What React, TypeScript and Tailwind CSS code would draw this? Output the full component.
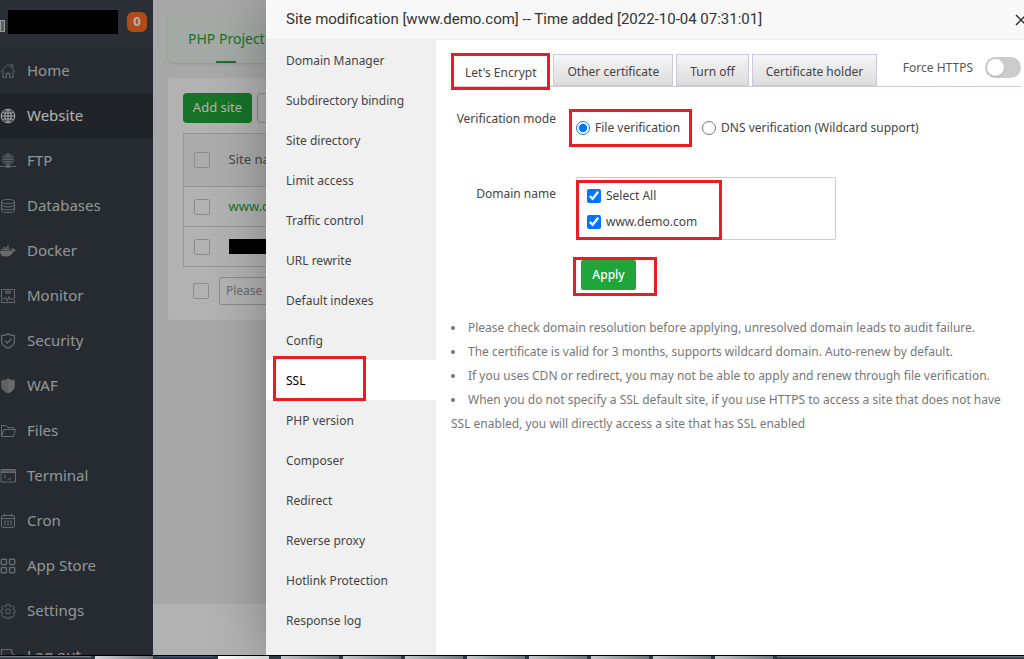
import { useState } from "react";
import type { ReactNode } from "react";
import { FaDocker } from "react-icons/fa";

const svgProps = {
  viewBox: "0 0 16 16",
  fill: "none",
  stroke: "currentColor",
  strokeWidth: 1,
  className: "size-4 shrink-0",
  "aria-hidden": true,
} as const;

const GLOBE = "M2.5 5h11M1.2 8h13.6M2.5 11h11M8 1.2v13.6M8 1.2c-4.3 3.6-4.3 10 0 13.6M8 1.2c4.3 3.6 4.3 10 0 13.6";

interface NavItem {
  label: string;
  icon: ReactNode;
}

const NAV: NavItem[] = [
  {
    label: "Home",
    icon: (
      <svg {...svgProps}>
        <path d="M1 8.5 8 1.5l7 7M3 8v6.5h3.5V10h3v4.5H13V8M11 3V1.8h2V5" />
      </svg>
    ),
  },
  {
    label: "Website",
    icon: (
      <svg {...svgProps}>
        <circle cx="8" cy="8" r="6.8" />
        <path d={GLOBE} />
      </svg>
    ),
  },
  {
    label: "FTP",
    icon: (
      <svg {...svgProps}>
        <g transform="translate(1.6 0) scale(.8)">
          <circle cx="8" cy="8" r="6.8" />
          <path d={GLOBE} />
        </g>
        <path d="M0 13.5h6M10 13.5h6M8 12v1" />
        <path d="M6.5 12.8h3v1.6h-3z" fill="currentColor" />
      </svg>
    ),
  },
  {
    label: "Databases",
    icon: (
      <svg {...svgProps}>
        <ellipse cx="8" cy="3.6" rx="6.5" ry="2.2" />
        <path d="M1.5 3.6v8.8c0 3 13 3 13 0V3.6M1.5 6.6c0 3 13 3 13 0M1.5 9.6c0 3 13 3 13 0" />
      </svg>
    ),
  },
  { label: "Docker", icon: <FaDocker className="size-4 shrink-0" aria-hidden /> },
  {
    label: "Monitor",
    icon: (
      <svg {...svgProps}>
        <path d="M1.5 10V1.5h13V10M1.5 12v2.5h13V12M1 11h3l1.5-2 1.7 4L9 8.5l1.3 3.5 1.2-1H15M5 3.5h6M5 5h6" />
      </svg>
    ),
  },
  {
    label: "Security",
    icon: (
      <svg {...svgProps} strokeWidth={1.3}>
        <path d="M8 .9c2 1.3 4 1.7 6.4 1.8v5c0 3.7-2.6 6-6.4 7.5C4.2 13.7 1.6 11.4 1.6 7.7v-5C4 2.6 6 2.2 8 .9z" />
        <path d="m4.8 7.6 2.5 2.5 4.2-4.4" />
      </svg>
    ),
  },
  {
    label: "WAF",
    icon: (
      <svg {...svgProps} stroke="none" fill="currentColor">
        <path d="M8 .5v15C4 13.8 1.2 11.5 1.2 7.8V2.5h1.3v-1h1.6v.8h1.3v-1H7V.5z" opacity=".85" />
        <path d="M8 .5v15c4-1.7 6.8-4 6.8-7.7V2.5h-1.3v-1h-1.6v.8h-1.3v-1H9V.5z" />
      </svg>
    ),
  },
  {
    label: "Files",
    icon: (
      <svg {...svgProps}>
        <path d="M1.5 13.5v-11H6l1.5 2h6v2M1.5 13.5l2.5-7h11.5l-2 7z" />
      </svg>
    ),
  },
  {
    label: "Terminal",
    icon: (
      <svg {...svgProps}>
        <path d="M1 1.5h14.5V14H1zM1 4.5h14.5M3.5 6.5 6 8.5l-2.5 2M7.5 11h4" />
        <path d="M1 2.5h14.5M1 3.5h14.5" opacity=".7" />
      </svg>
    ),
  },
  {
    label: "Cron",
    icon: (
      <svg {...svgProps}>
        <rect x="1.5" y="2.5" width="13" height="12" rx="1.5" />
        <path d="M1.5 5.5h13M4.5.5v3M11.5.5v3M4 8h2m1 0h2m1 0h2M4 10h2m1 0h2m1 0h2M4 12h2m1 0h2m1 0h2" />
      </svg>
    ),
  },
  {
    label: "App Store",
    icon: (
      <svg {...svgProps} strokeWidth={1.4}>
        <rect x="1.2" y="1.2" width="5.3" height="5.3" rx="1" />
        <rect x="9.5" y="1.2" width="5.3" height="5.3" rx="1" />
        <rect x="1.2" y="9.5" width="5.3" height="5.3" rx="1" />
        <rect x="9.5" y="9.5" width="5.3" height="5.3" rx="1" />
      </svg>
    ),
  },
  {
    label: "Settings",
    icon: (
      <svg {...svgProps}>
        <path d="M6.7 1.2h2.6l.4 1.9 1.2.5 1.7-1 1.8 1.8-1 1.7.5 1.2 1 .2v2l-1 .3-.5 1.2 1 1.7-1.8 1.8-1.7-1-1.2.5-.4 1.5H6.7l-.4-1.5-1.2-.5-1.7 1-1.8-1.8 1-1.7-.5-1.2-1-.3v-2l1-.2.5-1.2-1-1.7 1.8-1.8 1.7 1 1.2-.5z" />
        <circle cx="8" cy="8.2" r="2.4" />
      </svg>
    ),
  },
  {
    label: "Log out",
    icon: (
      <svg {...svgProps} strokeWidth={1.2}>
        <path d="M11.5 5V1.5h-10v13h10V11M6 8h9M12 5l3 3-3 3" />
      </svg>
    ),
  },
];

const MENU = [
  "Domain Manager",
  "Subdirectory binding",
  "Site directory",
  "Limit access",
  "Traffic control",
  "URL rewrite",
  "Default indexes",
  "Config",
  "SSL",
  "PHP version",
  "Composer",
  "Redirect",
  "Reverse proxy",
  "Hotlink Protection",
  "Response log",
];

const TABS = ["Let's Encrypt", "Other certificate", "Turn off", "Certificate holder"];

const TIPS = [
  "Please check domain resolution before applying, unresolved domain leads to audit failure.",
  "The certificate is valid for 3 months, supports wildcard domain. Auto-renew by default.",
  "If you uses CDN or redirect, you may not be able to apply and renew through file verification.",
  "When you do not specify a SSL default site, if you use HTTPS to access a site that does not have SSL enabled, you will directly access a site that has SSL enabled",
];

/** Red frame laid over the control it marks */
function Mark({ className }: { className: string }) {
  return <span aria-hidden className={`pointer-events-none absolute z-10 border-3 border-[#ed1c24] ${className}`} />;
}

function Sidebar() {
  return (
    <aside className="w-[153px] shrink-0 overflow-hidden bg-[#363e46] text-[#d4d6d8]">
      <div className="flex h-12 items-center bg-[#3d444c] pb-1">
        <span className="mt-2 mr-[3px] h-3 w-[5px] border border-[#e0e0e0] bg-[#888]" />
        <span className="h-6 w-[110px] bg-black" />
        <span className="ml-[9px] flex size-5 items-center justify-center rounded-md bg-[#fc6d26] text-[13px] font-bold text-white">0</span>
      </div>
      <nav>
        {NAV.map((item) => (
          <a
            key={item.label}
            href="#"
            className={`flex h-[45px] items-center gap-[11px] text-[15px] ${item.label === "Website" ? "bg-[#2e3339] text-white" : ""}`}
          >
            <span className={item.label === "Website" ? "" : "opacity-60"}>{item.icon}</span>
            <span className="whitespace-nowrap">{item.label}</span>
          </a>
        ))}
      </nav>
    </aside>
  );
}

function RowCheck({ label }: { label: string }) {
  return <input type="checkbox" aria-label={label} className="block size-4 appearance-none rounded-xs border border-[#c8c8c8]" />;
}

function SiteList() {
  return (
    <main className="flex min-w-0 flex-1 flex-col bg-[#f1f1f1] text-[13px]">
      <div className="flex-1 pt-[13px] pl-[15px]">
        <div className="flex h-[50px] rounded-md bg-[#ebf5ef] pl-5 shadow-sm">
          <a href="#" className="relative flex items-center text-[14px] whitespace-nowrap text-[#20a53a]">
            PHP Project
            <span className="absolute bottom-0 left-1/2 h-0.5 w-5 -translate-x-1/2 bg-[#20a53a]" />
          </a>
        </div>
        <section className="mt-[15px] rounded-sm bg-white p-[15px]">
          <div className="flex gap-[5px]">
            <button className="h-[30px] w-[69px] rounded-sm bg-[#20a53a] whitespace-nowrap text-white">Add site</button>
            <button aria-label="More" className="h-[30px] w-24 rounded-sm border border-[#c8c8c8]" />
          </div>
          <table className="mt-[10px] w-full border border-[#d4d4d4] text-left whitespace-nowrap">
            <thead>
              <tr className="h-[53px] bg-[#f6f6f6] text-[#666]">
                <th className="w-[45px] pl-[10px]"><RowCheck label="All sites" /></th>
                <th className="font-normal">Site name</th>
              </tr>
            </thead>
            <tbody>
              <tr className="h-10 border-t border-[#d4d4d4]">
                <td className="pl-[10px]"><RowCheck label="www.demo.com" /></td>
                <td className="text-[#20a53a]">www.demo.com</td>
              </tr>
              <tr className="h-10 border-t border-[#d4d4d4]">
                <td className="pl-[10px]"><RowCheck label="Second site" /></td>
                <td><span className="block h-[15px] w-24 bg-black" /></td>
              </tr>
            </tbody>
          </table>
          <div className="mt-[10px] flex items-center gap-[10px] pl-[10px]">
            <RowCheck label="Select rows" />
            <select aria-label="Batch action" className="h-7 w-40 appearance-none rounded-xs border border-[#c8c8c8] px-1.5 text-[12px] text-[#999]">
              <option>Please choose</option>
            </select>
          </div>
        </section>
      </div>
      <footer className="h-[51px] bg-white" />
    </main>
  );
}

function SslPanel() {
  const [tab, setTab] = useState(TABS[0]);
  return (
    <div className="min-w-0 flex-1 pt-[15px] pr-[3px] pl-[15px]">
      <div className="flex h-8 items-end gap-[3px] border-b border-[#cac9dd]">
        {TABS.map((name) => (
          <button
            key={name}
            onClick={() => setTab(name)}
            className={`relative h-8 px-[13px] pt-1 whitespace-nowrap ${
              tab === name ? "border border-b-0 border-white bg-white" : "border border-[#cac9dd] bg-linear-to-b from-[#f6f6f6] to-[#dcdcdc]"
            }`}
          >
            {name}
            {name === TABS[0] && <Mark className="-top-0.5 -right-px -bottom-1 -left-px" />}
          </button>
        ))}
        <label className="ml-auto flex items-center gap-3 self-start pt-0.5 whitespace-nowrap text-[#555]">
          Force HTTPS
          <input
            type="checkbox"
            role="switch"
            className="relative h-[21px] w-9 appearance-none rounded-full bg-[#ccc] before:absolute before:top-0.5 before:left-0.5 before:size-[17px] before:rounded-full before:bg-white before:shadow-sm"
          />
        </label>
      </div>

      <div role="radiogroup" aria-labelledby="mode-label" className="flex gap-[13px] pt-[22px]">
        <span id="mode-label" className="w-[105px] shrink-0 pt-px text-right leading-[18px]">Verification mode</span>
        <div className="flex gap-[10px] whitespace-nowrap">
          <label className="relative flex h-[38px] items-center gap-[5px] pr-3 pl-[7px]">
            <input type="radio" name="mode" defaultChecked className="size-[14px] accent-[#0075ff]" />
            File verification
            <Mark className="inset-0" />
          </label>
          <label className="flex h-[38px] items-center gap-[5px]">
            <input type="radio" name="mode" className="size-[14px] accent-[#0075ff]" />
            DNS verification (Wildcard support)
          </label>
        </div>
      </div>

      <div role="group" aria-labelledby="domain-label" className="mt-[30px] flex gap-5">
        <span id="domain-label" className="w-[105px] shrink-0 pt-2 text-right leading-[18px]">Domain name</span>
        <div className="relative flex h-[63px] w-[260px] flex-col gap-2 rounded-xs border border-[#ccc] pt-[9px] pl-[10px]">
          <label className="flex h-[18px] items-center gap-[5px]">
            <input type="checkbox" defaultChecked className="size-[14px] accent-[#0075ff]" />
            Select All
          </label>
          <label className="flex h-[18px] items-center gap-[5px]">
            <input type="checkbox" defaultChecked className="size-[14px] accent-[#0075ff]" />
            www.demo.com
          </label>
          <Mark className="top-0.5 -left-px h-[60px] w-[146px]" />
        </div>
      </div>

      <div className="mt-5 pl-[130px]">
        <div className="relative w-fit">
          <button className="h-[30px] w-[55px] rounded-xs bg-[#20a53a] font-medium text-white">Apply</button>
          <Mark className="-top-[3px] -left-2 h-[39px] w-[84px]" />
        </div>
      </div>

      <ul className="mt-[26px] list-inside list-disc leading-6 text-[#777]">
        {TIPS.map((tip) => (
          <li key={tip}>{tip}</li>
        ))}
      </ul>
    </div>
  );
}

function SiteDialog() {
  return (
    <section
      role="dialog"
      aria-label="Site modification"
      className="absolute inset-y-0 right-0 left-[266px] flex flex-col bg-white text-[#444] shadow-[0_0_50px_rgba(0,0,0,0.3)]"
    >
      <header className="flex h-10 shrink-0 items-center justify-between overflow-hidden border-b border-[#eee] bg-[#f8f8f8] pl-5">
        <h1 className="font-[Roboto,'Noto_Sans',sans-serif] text-[15px] whitespace-nowrap text-[#333]">
          Site modification [www.demo.com] -- Time added [2022-10-04 07:31:01]
        </h1>
        <button aria-label="Close" className="-mr-1">
          <svg viewBox="0 0 14 14" className="size-[14px]" fill="none" stroke="#2e2d3c" strokeWidth="1.5">
            <path d="m2 2 10 10M12 2 2 12" />
          </svg>
        </button>
      </header>
      <div className="flex min-h-0 flex-1">
        <nav className="w-[170px] shrink-0 bg-[#f0f0f0]">
          {MENU.map((name) => (
            <a key={name} href="#" className={`relative flex h-10 items-center pt-0.5 pl-5 whitespace-nowrap ${name === "SSL" ? "bg-white text-black" : ""}`}>
              {name}
              {name === "SSL" && <Mark className="-top-1 left-[7px] h-[45px] w-[93px]" />}
            </a>
          ))}
        </nav>
        <SslPanel />
      </div>
    </section>
  );
}

/** Sliver of the desktop task bar, window buttons only */
function TaskBar() {
  return (
    <div className="flex h-1 shrink-0 gap-1 overflow-hidden border-t border-black bg-[#2f3b45]">
      <span className="w-[91px] bg-linear-to-b from-[#8a8f98] to-[#1a232c]" />
      <span className="w-[58px] bg-linear-to-r from-[#d5d5dc] to-[#77777f]" />
      <span className="w-[57px] bg-linear-to-b from-[#53657c] to-[#14202f]" />
      <span className="w-[51px] bg-linear-to-r from-white to-[#d0d4d4]" />
      <span className="w-1" />
      {Array.from({ length: 8 }, (_, i) => (
        <span key={i} className="w-[58px] bg-linear-to-r from-[#c3c9c9] to-[#6d767c]" />
      ))}
      <span className="flex-1 bg-linear-to-b from-[#76818c] to-[#1e2b34]" />
    </div>
  );
}

export default function App() {
  return (
    <div className="flex h-screen flex-col overflow-hidden font-['Noto_Sans','Noto_Sans_CJK_SC',sans-serif] text-[12px]">
      <div className="relative flex min-h-0 flex-1 overflow-hidden">
        <Sidebar />
        <SiteList />
        <div className="absolute inset-0 bg-black/30" />
        <SiteDialog />
      </div>
      <TaskBar />
    </div>
  );
}
